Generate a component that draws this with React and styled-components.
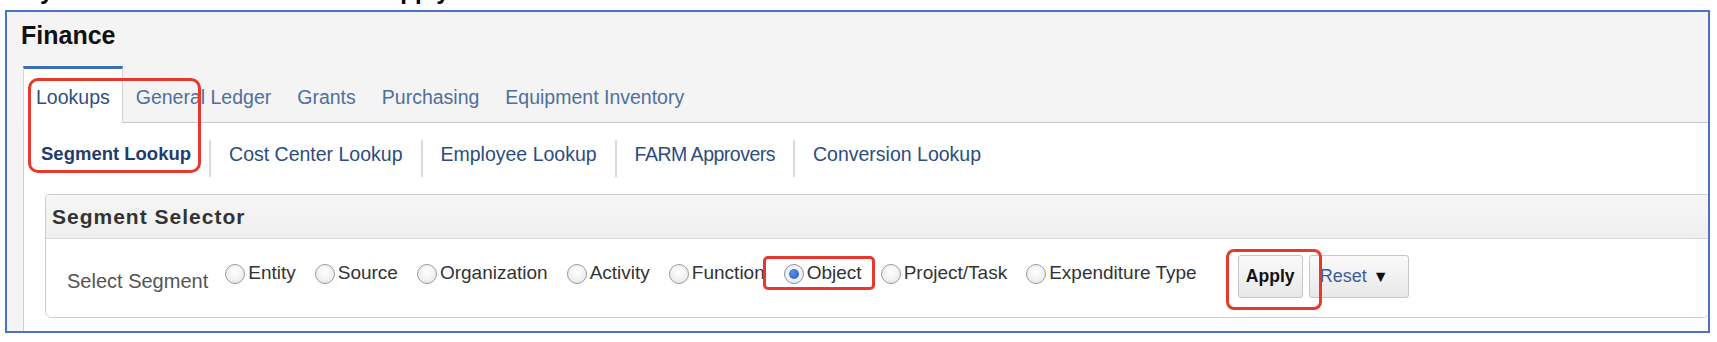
import React from "react";
import styled, { createGlobalStyle } from "styled-components";

const GlobalStyle = createGlobalStyle`
  body {
    margin: 0;
    background: #fff;
    font-family: "Liberation Sans", Arial, sans-serif;
  }
`;

const Caption = styled.div`
  height: 10px;
  overflow: hidden;
`;

const CaptionText = styled.div`
  margin-top: -21px;
  font: bold 24px/24px "Liberation Sans", Arial, sans-serif;
  word-spacing: 5.5px;
  white-space: nowrap;
  color: #000;
`;

const Frame = styled.div`
  position: relative;
  margin-left: 5px;
  width: 1705px;
  height: 323px;
  box-sizing: border-box;
  border: 2px solid #4a73c6;
  background: #f4f4f4;
  overflow: hidden;
  display: flex;
  flex-direction: column;
`;

const Title = styled.div`
  padding: 9px 0 0 14px;
  margin-bottom: 17px;
  font: bold 25px/28px "Liberation Sans", Arial, sans-serif;
  color: #111;
`;

const TabRow = styled.div`
  display: flex;
  height: 57px;
  padding-left: 16px;
  margin-bottom: -1px;
  position: relative;
  z-index: 1;
`;

const Tab = styled.div`
  box-sizing: border-box;
  padding: 17px 12px 0;
  border-top: 3px solid ${(p) => (p.$active ? "#3b6db6" : "transparent")};
  border-left: 1px solid ${(p) => (p.$active ? "#d4d4d4" : "transparent")};
  border-right: 1px solid ${(p) => (p.$active ? "#d4d4d4" : "transparent")};
  background: ${(p) => (p.$active ? "#fff" : "transparent")};
  font-size: 19.5px;
  line-height: 22px;
  color: ${(p) => (p.$active ? "#2f4f80" : "#4f6f9c")};
  white-space: nowrap;
`;

const Content = styled.div`
  flex: 1;
  margin-left: 16px;
  background: #fff;
  border-top: 1px solid #c9c9c9;
  border-left: 1px solid #d0d0d0;
  display: flex;
  flex-direction: column;
`;

const SubTabs = styled.div`
  display: flex;
  padding: 17px 0 0 17px;
`;

const SubTab = styled.div`
  height: 37px;
  line-height: 28px;
  padding: 0 18px;
  font-size: ${(p) => (p.$active ? "18.5px" : "19.5px")};
  font-weight: ${(p) => (p.$active ? "bold" : "normal")};
  color: ${(p) => (p.$active ? "#1f3c6c" : "#2d4c7f")};
  letter-spacing: ${(p) => (p.$tight ? "-0.5px" : "0")};
  white-space: nowrap;

  &:first-child {
    padding-left: 0;
  }

  & + & {
    border-left: 2px solid #dadada;
  }
`;

const Panel = styled.div`
  margin: 17px -2px 0 21px;
  border: 1px solid #cdcdcd;
  border-radius: 4px 4px 7px 7px;
  overflow: hidden;
`;

const PanelHeader = styled.div`
  height: 43px;
  line-height: 43px;
  padding-left: 6px;
  background: linear-gradient(#f6f6f6, #efefef);
  border-bottom: 1px solid #d6d6d6;
  font-size: 21px;
  font-weight: bold;
  letter-spacing: 1px;
  color: #333;
`;

const PanelBody = styled.div`
  height: 78px;
  box-sizing: border-box;
  display: flex;
  align-items: flex-start;
  padding: 15px 0 0 21px;
  background: #fff;
`;

const SegmentLabel = styled.div`
  margin: 16px 17px 0 0;
  font-size: 20px;
  line-height: 22px;
  color: #555;
  white-space: nowrap;
`;

const RadioItem = styled.label`
  display: flex;
  align-items: flex-start;
  height: 22px;
  margin-top: 8px;
  margin-right: ${(p) => (p.$last ? "41px" : "19px")};
  font-size: 19px;
  line-height: 22px;
  color: #333;
  white-space: nowrap;
`;

const RadioCircle = styled.span`
  width: 20px;
  height: 20px;
  margin: 2px 3px 0 0;
  box-sizing: border-box;
  border-radius: 50%;
  border: 1.5px solid ${(p) => (p.$checked ? "#7d93b8" : "#9a9a9a")};
  background: radial-gradient(circle at 50% 40%, #ffffff, #e4e4e4);
  display: flex;
  align-items: center;
  justify-content: center;
  flex-shrink: 0;
`;

const RadioDot = styled.span`
  width: 10px;
  height: 10px;
  border-radius: 50%;
  background: radial-gradient(circle at 40% 35%, #5b8fe6, #2457c4);
`;

const ButtonGroup = styled.div`
  display: flex;
  gap: 6px;
  margin-top: 1px;
`;

const Button = styled.button`
  height: 43px;
  width: ${(p) => p.$width}px;
  box-sizing: border-box;
  padding: 0 0 0 ${(p) => (p.$primary ? 0 : 10)}px;
  border: 1px solid #c6c6c6;
  border-radius: 3px;
  background: linear-gradient(#fafafa, #e8e8e8);
  display: flex;
  align-items: center;
  justify-content: ${(p) => (p.$primary ? "center" : "flex-start")};
  font-family: "Liberation Sans", Arial, sans-serif;
  font-size: ${(p) => (p.$primary ? "17.5px" : "18px")};
  font-weight: ${(p) => (p.$primary ? "bold" : "normal")};
  color: ${(p) => (p.$primary ? "#111" : "#3c5d9a")};
  cursor: pointer;
`;

const Caret = styled.span`
  margin-left: 6px;
  font-size: 16px;
  color: #111;
`;

const Annotation = styled.div`
  position: absolute;
  box-sizing: border-box;
  border: 3px solid #e8372c;
  border-radius: ${(p) => p.$r}px;
  pointer-events: none;
  z-index: 5;
`;

const tabs = ["Lookups", "General Ledger", "Grants", "Purchasing", "Equipment Inventory"];
const subTabs = ["Segment Lookup", "Cost Center Lookup", "Employee Lookup", "FARM Approvers", "Conversion Lookup"];
const segments = ["Entity", "Source", "Organization", "Activity", "Function", "Object", "Project/Task", "Expenditure Type"];

export default function App() {
  return (
    <>
      <GlobalStyle />
      <Caption>
        <CaptionText>Only then select this and click Apply</CaptionText>
      </Caption>
      <Frame>
        <Title>Finance</Title>
        <TabRow>
          {tabs.map((t, i) => (
            <Tab key={t} $active={i === 0}>
              {t}
            </Tab>
          ))}
        </TabRow>
        <Content>
          <SubTabs>
            {subTabs.map((t, i) => (
              <SubTab key={t} $active={i === 0} $tight={t === "FARM Approvers"}>
                {t}
              </SubTab>
            ))}
          </SubTabs>
          <Panel>
            <PanelHeader>Segment Selector</PanelHeader>
            <PanelBody>
              <SegmentLabel>Select Segment</SegmentLabel>
              {segments.map((s, i) => (
                <RadioItem key={s} $last={i === segments.length - 1}>
                  <RadioCircle $checked={s === "Object"}>
                    {s === "Object" && <RadioDot />}
                  </RadioCircle>
                  {s}
                </RadioItem>
              ))}
              <ButtonGroup>
                <Button $primary $width={65}>Apply</Button>
                <Button $width={100}>
                  Reset<Caret>▼</Caret>
                </Button>
              </ButtonGroup>
            </PanelBody>
          </Panel>
        </Content>
        <Annotation $r={10} style={{ left: 21, top: 66, width: 173, height: 95 }} />
        <Annotation $r={5} style={{ left: 756, top: 244, width: 112, height: 34 }} />
        <Annotation $r={8} style={{ left: 1219, top: 237, width: 96, height: 61 }} />
      </Frame>
    </>
  );
}
